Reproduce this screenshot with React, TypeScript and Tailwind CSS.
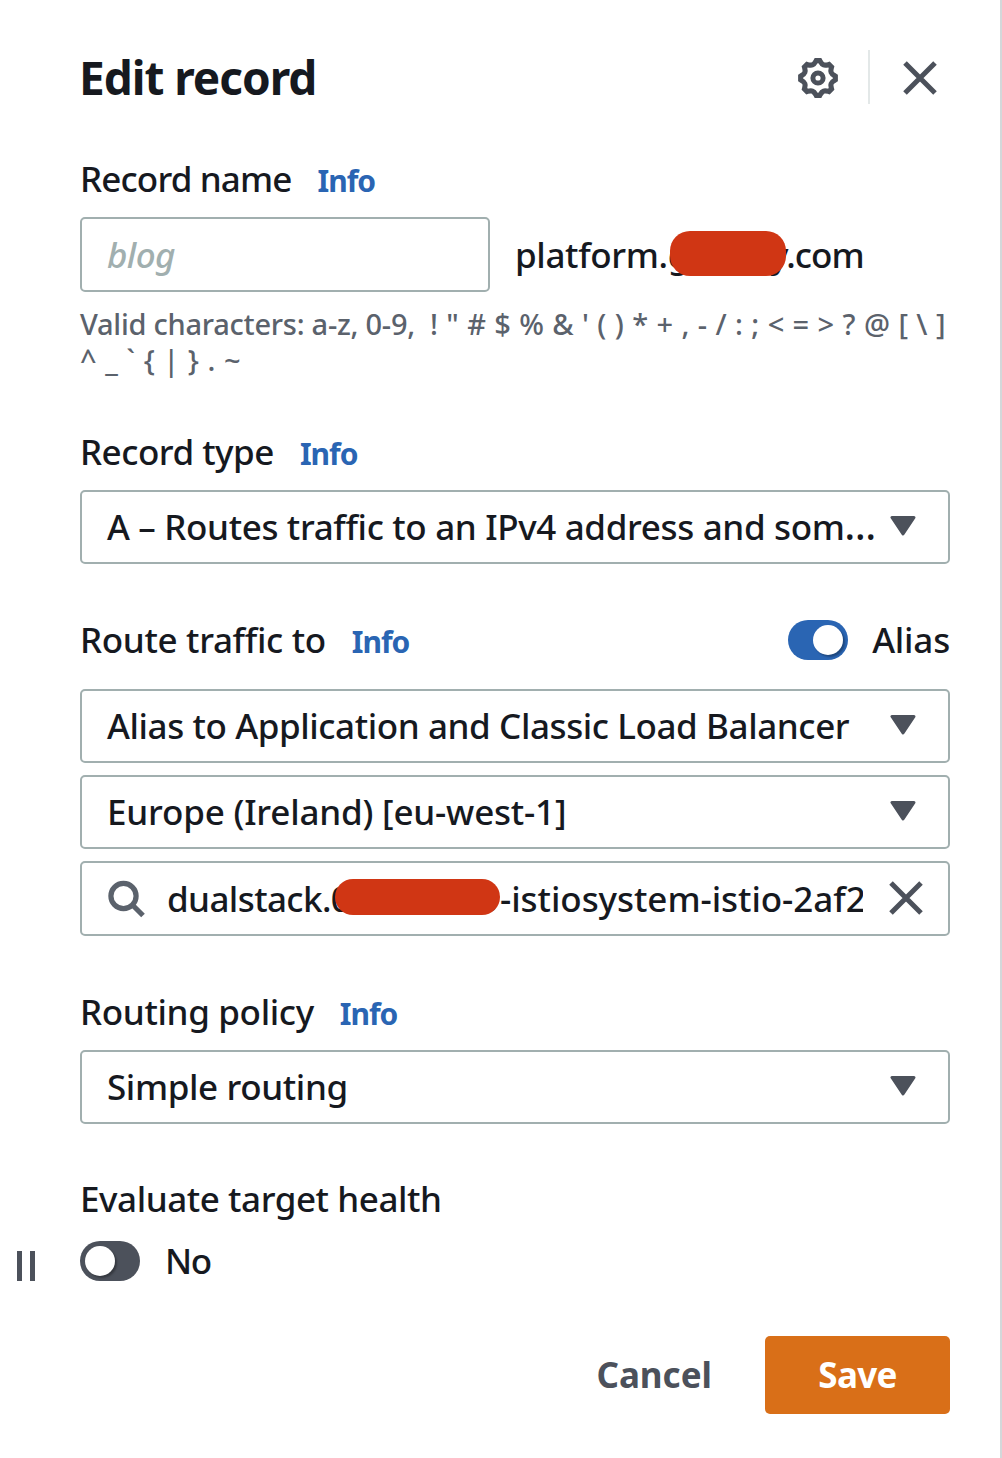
import type { ReactNode } from 'react';

const polar = (r: number, deg: number) => {
  const a = ((deg - 90) * Math.PI) / 180;
  return `${(20 + r * Math.cos(a)).toFixed(2)} ${(20 + r * Math.sin(a)).toFixed(2)}`;
};

// Eight flat teeth joined by rounded notches.
const gearPath =
  Array.from({ length: 8 }, (_, i) => {
    const t = i * 45;
    return `${i ? 'L' : 'M'}${polar(17.4, t - 6)}L${polar(17.4, t + 6)}C${polar(15.6, t + 11)} ${polar(14.3, t + 15)} ${polar(14.3, t + 22.5)}C${polar(14.3, t + 30)} ${polar(15.6, t + 34)} ${polar(17.4, t + 39)}`;
  }).join('') + 'Z';

function Gear() {
  return (
    <svg className="h-10 w-10" viewBox="0 0 40 40" fill="none" stroke="#4c515b" strokeWidth="5.2" strokeLinejoin="miter">
      <path d={gearPath} />
      <circle cx="20" cy="20" r="5.1" strokeWidth="5" />
    </svg>
  );
}

function Cross() {
  return (
    <svg className="h-9 w-9" viewBox="0 0 36 36" fill="none" stroke="#4c515b" strokeWidth="5">
      <path d="M3 3 33 33M33 3 3 33" />
    </svg>
  );
}

function Caret() {
  return (
    <svg className="mb-0.5 h-5 w-[26px] shrink-0" viewBox="0 0 26 20" fill="#4c515b" stroke="#4c515b" strokeWidth="3" strokeLinejoin="round">
      <path d="M2 1.5H24L13 18Z" />
    </svg>
  );
}

function Label({ children, info = true }: { children: ReactNode; info?: boolean }) {
  return (
    <div className="flex h-11 items-baseline leading-[44px]">
      {children}
      {info && <a className="ml-[26px] text-[30px] font-bold tracking-[-1px] text-[#2a65b3]">Info</a>}
    </div>
  );
}

function Select({ children }: { children: ReactNode }) {
  return (
    <div className="flex h-[74px] items-center justify-between rounded-[5px] border-2 border-[#a1afaf] pr-8 pl-[25px] whitespace-nowrap">
      {children}
      <Caret />
    </div>
  );
}

function Toggle({ on }: { on: boolean }) {
  return (
    <div className={`flex h-10 w-[60px] items-center rounded-full px-[5px] ${on ? 'justify-end bg-[#2a65b3]' : 'justify-start bg-[#4c515b]'}`}>
      <div className="h-[30px] w-[30px] rounded-full bg-white shadow-[2px_2px_2px_rgba(0,0,0,0.3)]" />
    </div>
  );
}

export default function App() {
  return (
    <main className="flex h-[1458px] w-[1002px] flex-col overflow-hidden border-r-2 border-[#d3d8da] bg-white pt-[46px] pr-[50px] pl-20 font-['Noto_Sans',sans-serif] text-[35px] leading-[44px] font-medium text-[#16191f]">
      <header className="flex h-[60px] items-center justify-between">
        <h1 className="-ml-px pt-[2px] text-[46px] leading-[60px] font-bold tracking-[-1.05px]">Edit record</h1>
        <div className="flex items-center pt-[2px] pr-3">
          <div className="pt-[2px]">
            <Gear />
          </div>
          <div className="mr-[32px] ml-[30px] h-[54px] w-[2px] bg-[#e3e8e8]" />
          <div className="pt-[2px]">
            <Cross />
          </div>
        </div>
      </header>

      <section className="mt-[51px]">
        <Label>
          <span className="tracking-[-0.85px]">Record name</span>
        </Label>
        <div className="mt-[16px] flex h-[75px] items-center">
          <div className="flex h-full w-[410px] items-center rounded-[5px] border-2 border-[#a1afaf] pl-[25px] tracking-[-0.6px] text-[#a1afaf] italic">
            blog
          </div>
          <div className="relative ml-[25px] flex">
            <span className="w-[255px] tracking-[-0.35px]">platform.g</span>
            <span className="tracking-[-0.9px]">y.com</span>
            <span className="absolute -top-[2px] left-[155px] h-[45px] w-[116px] rounded-[20px] bg-[#d03614]" />
          </div>
        </div>
        <p className="mt-[14px] h-[72px] text-[29px] leading-9 whitespace-nowrap text-[#5b626c]">
          <span className="inline-block w-[350px] tracking-[-0.25px]">Valid characters: a-z, 0-9,</span>
          <span className="[word-spacing:0.85px]">{'! " # $ % & \' ( ) * + , - / : ; < = > ? @ [ \\ ]'}</span>
          <br />
          <span className="[word-spacing:1px]">{'^ _ ` { | } . ~'}</span>
        </p>
      </section>

      <section className="mt-[52px]">
        <Label>
          <span className="tracking-[-0.5px]">Record type</span>
        </Label>
        <div className="mt-[16px]">
          <Select>
            <span className="tracking-[-0.35px]">
              A – Routes traffic to an IPv4 address and som<span className="text-[39px] leading-none">…</span>
            </span>
          </Select>
        </div>
      </section>

      <section className="mt-[54px]">
        <div className="flex items-center justify-between">
          <Label>
            <span className="tracking-[-0.33px]">Route traffic to</span>
          </Label>
          <div className="flex items-center">
            <Toggle on />
            <span className="ml-6 tracking-[-0.2px]">Alias</span>
          </div>
        </div>
        <div className="mt-[27px] flex flex-col gap-3">
          <Select>
            <span className="tracking-[-0.41px]">Alias to Application and Classic Load Balancer</span>
          </Select>
          <Select>
            <span className="tracking-[-0.2px]">Europe (Ireland) [eu-west-1]</span>
          </Select>
          <div className="relative flex h-[75px] items-center rounded-[5px] border-2 border-[#a1afaf] pr-[24px] pl-[26px]">
            <svg className="h-[38px] w-[38px] shrink-0" viewBox="0 0 38 38" fill="none" stroke="#5b626c" strokeWidth="5.2">
              <circle cx="15.5" cy="16" r="12.6" />
              <path d="M24.5 25 35 35.5" />
            </svg>
            <div className="ml-[21px] flex w-[696px] overflow-hidden whitespace-nowrap">
              <span className="w-[313px] shrink-0 tracking-[-0.6px]">dualstack.0</span>
              <span className="w-[20px] shrink-0">s</span>
              <span className="shrink-0 tracking-[-0.05px]">-istiosystem-istio-2af2</span>
            </div>
            <span className="absolute top-4 left-[253px] h-9 w-[165px] rounded-full bg-[#d03614]" />
            <div className="mb-px ml-auto flex">
              <Cross />
            </div>
          </div>
        </div>
      </section>

      <section className="mt-[54px]">
        <Label>
          <span className="tracking-[-0.35px]">Routing policy</span>
        </Label>
        <div className="mt-[16px]">
          <Select>
            <span className="tracking-[-0.38px]">Simple routing</span>
          </Select>
        </div>
      </section>

      <section className="mt-[53px]">
        <Label info={false}>
          <span className="tracking-[-0.43px]">Evaluate target health</span>
        </Label>
        <div className="mt-[20px] -ml-[63px] flex h-10 items-center">
          <div className="mt-[9px] mr-[45px] h-[30px] w-[18px] border-x-[5px] border-[#4c515b]" />
          <Toggle on={false} />
          <span className="ml-[25px] tracking-[-1.5px]">No</span>
        </div>
      </section>

      <footer className="mt-[55px] flex items-center justify-end font-bold">
        <button className="mr-[53px] text-[#4c515b]">Cancel</button>
        <button className="h-[78px] w-[185px] rounded-[5px] bg-[#d96f18] tracking-[-0.7px] text-white">Save</button>
      </footer>
    </main>
  );
}
